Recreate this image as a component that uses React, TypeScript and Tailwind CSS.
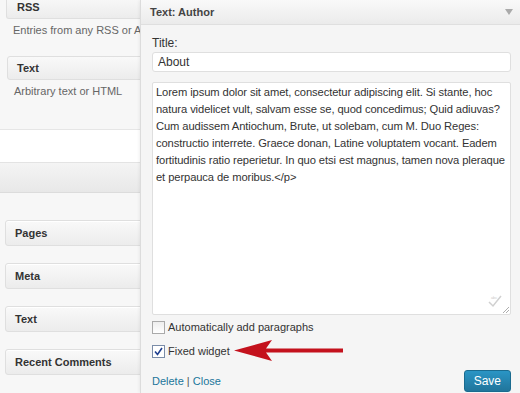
import React from 'react';

const font = { fontFamily: '"Liberation Sans", Arial, sans-serif' };

const lorem =
  'Lorem ipsum dolor sit amet, consectetur adipiscing elit. Si stante, hoc natura videlicet vult, salvam esse se, quod concedimus; Quid adiuvas? Cum audissem Antiochum, Brute, ut solebam, cum M. Duo Reges: constructio interrete. Graece donan, Latine voluptatem vocant. Eadem fortitudinis ratio reperietur. In quo etsi est magnus, tamen nova pleraque et perpauca de moribus.</p>';

function WidgetBox({ title }: { title: string }) {
  return (
    <div className="ml-[5px] h-[26px] w-[160px] rounded-[3px] border border-[#dfdfdf] bg-gradient-to-b from-[#f9f9f9] to-[#ececec] pl-[9px] text-[11px] font-bold leading-[25px] text-[#333] shadow-[inset_0_1px_0_#fff]">
      {title}
    </div>
  );
}

export default function App() {
  return (
    <div className="relative flex h-[393px] w-[520px] overflow-hidden bg-[#f5f5f5]" style={font}>
      {/* left widget list */}
      <div className="flex w-[140px] shrink-0 flex-col overflow-hidden">
        <div className="h-[130px] border-b border-[#e6e6e6] bg-[#f7f7f7] pl-[1px]">
          <div className="ml-[5px] h-[19px] w-[160px] rounded-b-[3px] border border-t-0 border-[#dfdfdf] bg-gradient-to-b from-[#f7f7f7] to-[#ececec] pl-[10px] text-[11px] font-bold leading-[15px] text-[#333]">
            RSS
          </div>
          <p className="mt-[3px] whitespace-nowrap pl-[12px] text-[11px] leading-[16px] text-[#666]">
            Entries from any RSS or Atom feed
          </p>
          <div className="ml-[6px] mt-[18px] h-[24px] w-[160px] rounded-[3px] border border-[#dfdfdf] bg-gradient-to-b from-[#f9f9f9] to-[#ececec] pl-[9px] text-[11px] font-bold leading-[22px] text-[#333]">
            Text
          </div>
          <p className="mt-[3px] pl-[13px] text-[11px] leading-[16px] text-[#666]">Arbitrary text or HTML</p>
        </div>
        <div className="h-[33px] border-b border-[#e3e3e3] bg-white" />
        <div className="h-[30px] border-b border-[#dcdcdc] bg-gradient-to-b from-[#f4f4f4] to-[#e8e8e8]" />
        <div className="flex flex-1 flex-col gap-[17px] bg-[#f7f7f7] pt-[27px]">
          <WidgetBox title="Pages" />
          <WidgetBox title="Meta" />
          <WidgetBox title="Text" />
          <WidgetBox title="Recent Comments" />
        </div>
      </div>

      {/* open widget panel */}
      <div className="flex flex-1 flex-col border-l border-[#dcdcdc] bg-[#f5f5f5] shadow-[-1px_0_3px_rgba(0,0,0,0.06)]">
        <div className="flex h-[25px] items-center justify-between border-b border-[#dfdfdf] bg-gradient-to-b from-[#f9f9f9] to-[#ebebeb] pl-[9px] pr-[7px]">
          <span className="text-[11px] font-bold text-[#444]">Text: Author</span>
          <svg width="8" height="6" viewBox="0 0 8 6">
            <path d="M0 0h8L4 6z" fill="#aaa" />
          </svg>
        </div>
        <div className="flex flex-1 flex-col pl-[11px] pr-[9px]">
          <label className="mt-[11px] text-[12px] leading-[14px] text-[#333]">Title:</label>
          <div className="mt-[2px] h-[20px] rounded-[3px] border border-[#dfdfdf] bg-white pl-[5px] text-[12px] leading-[18px] text-[#333]">
            About
          </div>
          <div className="relative mt-[10px] h-[233px] rounded-[2px] border border-[#dfdfdf] bg-white pl-[3px] pr-[2px] pt-[1px] text-[11.2px] leading-[17px] tracking-[-0.1px] text-[#333]">
            {lorem}
            <svg className="absolute bottom-[6px] right-[8px]" width="14" height="14" viewBox="0 0 14 14">
              <text x="3" y="5" fontSize="4" fill="#ccc" style={font}>
                abc
              </text>
              <path d="M1 8l4 4 8-10" stroke="#d0d0d0" strokeWidth="1.5" fill="none" />
            </svg>
            <svg className="absolute bottom-[1px] right-[1px]" width="6" height="6" viewBox="0 0 6 6">
              <path d="M0 6L6 0M3 6L6 3" stroke="#999" strokeWidth="0.8" />
            </svg>
          </div>
          <label className="mt-[4px] flex items-center gap-[3px] text-[11px] leading-[16px] text-[#333]">
            <span className="h-[13px] w-[13px] border border-[#aaa] bg-gradient-to-b from-[#eee] to-[#fff]" />
            Automatically add paragraphs
          </label>
          <label className="mt-[8px] flex items-center gap-[3px] text-[11px] leading-[16px] text-[#333]">
            <span className="flex h-[13px] w-[13px] items-center justify-center border border-[#7a8ca8] bg-white">
              <svg width="9" height="9" viewBox="0 0 9 9">
                <path d="M1 4.5l2.5 3L8 1" stroke="#1f3f8f" strokeWidth="1.6" fill="none" />
              </svg>
            </span>
            Fixed widget
          </label>
          <div className="mt-[11px] flex items-center justify-between">
            <span className="text-[11px] text-[#21759b]">
              Delete <span className="text-[#555]">|</span> Close
            </span>
            <button className="h-[22px] rounded-[3px] border border-[#1a6b8f] bg-gradient-to-b from-[#2a95c5] to-[#21759b] px-[9px] text-[12px] leading-[20px] text-white">
              Save
            </button>
          </div>
        </div>
      </div>

      {/* red annotation arrow */}
      <svg className="absolute left-[233px] top-[340px]" width="112" height="22" viewBox="0 0 112 22">
        <path d="M1 10.5L39 0L33 8.5H110V12.5H33L39 21z" fill="#c4121d" />
      </svg>
    </div>
  );
}
